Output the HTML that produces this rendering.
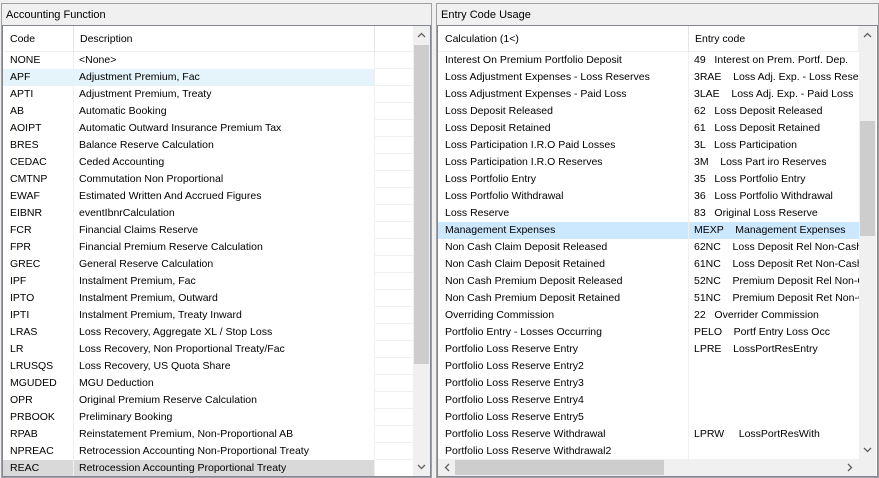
<!DOCTYPE html>
<html><head><meta charset="utf-8"><style>
*{margin:0;padding:0;box-sizing:border-box}
body{width:879px;height:478px;background:#f0f0f0;position:relative;overflow:hidden;font-family:"Liberation Sans",sans-serif;font-size:10.5px;color:#000}
.abs{position:absolute}
.panel{position:absolute;border:1px solid #a0a0a0;background:#f0f0f0}
.list{position:absolute;background:#fff;border:1px solid #828790;overflow:hidden}
.row{position:absolute;left:0;height:17px;border-bottom:1px solid #f0f0f0;white-space:pre;line-height:17px}
.c{position:absolute;top:0;height:17px;border-right:1px solid #f0f0f0;overflow:hidden;padding-left:5px}
.sb{position:absolute;background:#f0f0f0}
.th{position:absolute;background:#cdcdcd}
.arr{position:absolute}
</style></head><body>
<div class="panel" style="left:1px;top:3px;width:431px;height:475px"></div>
<div class="abs" style="left:6px;top:9px;font-size:11px">Accounting Function</div>
<div class="list" style="left:2px;top:25px;width:429px;height:452px">
 <div class="row" style="top:0;height:26px;width:410px;line-height:26px">
  <div class="c" style="left:0;width:71px;height:26px;padding-left:7px;border-right:1px solid #e5e5e5">Code</div>
  <div class="c" style="left:71px;width:301px;height:26px;padding-left:6px;border-right:1px solid #e5e5e5">Description</div>
 </div>
 <div id="L"></div>
 <div class="sb" style="left:410px;top:0;width:17px;height:450px"></div>
 <div class="th" style="left:411px;top:19px;width:15px;height:319px"></div>
 <svg class="arr" style="left:414px;top:6px" width="9" height="6"><path d="M1 5L4.5 1.5L8 5" fill="none" stroke="#606060" stroke-width="1.3"/></svg>
 <svg class="arr" style="left:414px;top:438px" width="9" height="6"><path d="M1 1L4.5 4.5L8 1" fill="none" stroke="#606060" stroke-width="1.3"/></svg>
</div>

<div class="panel" style="left:436px;top:3px;width:443px;height:475px"></div>
<div class="abs" style="left:441px;top:9px;font-size:11px">Entry Code Usage</div>
<div class="list" style="left:437px;top:25px;width:441px;height:452px">
 <div class="row" style="top:0;height:26px;width:421px;line-height:26px">
  <div class="c" style="left:0;width:251px;height:26px;padding-left:7px;border-right:1px solid #e5e5e5">Calculation (1&lt;)</div>
  <div class="c" style="left:251px;width:170px;height:26px;padding-left:6px">Entry code</div>
 </div>
 <div id="R"></div>
 <div class="sb" style="left:421px;top:0;width:17px;height:433px"></div>
 <div class="th" style="left:422px;top:95px;width:15px;height:115px"></div>
 <svg class="arr" style="left:425px;top:6px" width="9" height="6"><path d="M1 5L4.5 1.5L8 5" fill="none" stroke="#606060" stroke-width="1.3"/></svg>
 <svg class="arr" style="left:425px;top:421px" width="9" height="6"><path d="M1 1L4.5 4.5L8 1" fill="none" stroke="#606060" stroke-width="1.3"/></svg>
 <div class="sb" style="left:0;top:433px;width:438px;height:17px"></div>
 <div class="th" style="left:17px;top:434px;width:209px;height:15px"></div>
 <svg class="arr" style="left:6px;top:437px" width="6" height="9"><path d="M5 1L1.5 4.5L5 8" fill="none" stroke="#606060" stroke-width="1.3"/></svg>
 <svg class="arr" style="left:409px;top:437px" width="6" height="9"><path d="M1 1L4.5 4.5L1 8" fill="none" stroke="#606060" stroke-width="1.3"/></svg>
</div>
<script>
var L=[["NONE","<None>"],["APF","Adjustment Premium, Fac"],["APTI","Adjustment Premium, Treaty"],["AB","Automatic Booking"],["AOIPT","Automatic Outward Insurance Premium Tax"],["BRES","Balance Reserve Calculation"],["CEDAC","Ceded Accounting"],["CMTNP","Commutation Non Proportional"],["EWAF","Estimated Written And Accrued Figures"],["EIBNR","eventIbnrCalculation"],["FCR","Financial Claims Reserve"],["FPR","Financial Premium Reserve Calculation"],["GREC","General Reserve Calculation"],["IPF","Instalment Premium, Fac"],["IPTO","Instalment Premium, Outward"],["IPTI","Instalment Premium, Treaty Inward"],["LRAS","Loss Recovery, Aggregate XL / Stop Loss"],["LR","Loss Recovery, Non Proportional Treaty/Fac"],["LRUSQS","Loss Recovery, US Quota Share"],["MGUDED","MGU Deduction"],["OPR","Original Premium Reserve Calculation"],["PRBOOK","Preliminary Booking"],["RPAB","Reinstatement Premium, Non-Proportional AB"],["NPREAC","Retrocession Accounting Non-Proportional Treaty"],["REAC","Retrocession Accounting Proportional Treaty"]];
var R=[["Interest On Premium Portfolio Deposit","49   Interest on Prem. Portf. Dep."],["Loss Adjustment Expenses - Loss Reserves","3RAE    Loss Adj. Exp. - Loss Reserves"],["Loss Adjustment Expenses - Paid Loss","3LAE    Loss Adj. Exp. - Paid Loss"],["Loss Deposit Released","62   Loss Deposit Released"],["Loss Deposit Retained","61   Loss Deposit Retained"],["Loss Participation I.R.O Paid Losses","3L   Loss Participation"],["Loss Participation I.R.O Reserves","3M    Loss Part iro Reserves"],["Loss Portfolio Entry","35   Loss Portfolio Entry"],["Loss Portfolio Withdrawal","36   Loss Portfolio Withdrawal"],["Loss Reserve","83   Original Loss Reserve"],["Management Expenses","MEXP    Management Expenses"],["Non Cash Claim Deposit Released","62NC    Loss Deposit Rel Non-Cash"],["Non Cash Claim Deposit Retained","61NC    Loss Deposit Ret Non-Cash"],["Non Cash Premium Deposit Released","52NC    Premium Deposit Rel Non-Cash"],["Non Cash Premium Deposit Retained","51NC    Premium Deposit Ret Non-Cash"],["Overriding Commission","22   Overrider Commission"],["Portfolio Entry - Losses Occurring","PELO    Portf Entry Loss Occ"],["Portfolio Loss Reserve Entry","LPRE    LossPortResEntry"],["Portfolio Loss Reserve Entry2",""],["Portfolio Loss Reserve Entry3",""],["Portfolio Loss Reserve Entry4",""],["Portfolio Loss Reserve Entry5",""],["Portfolio Loss Reserve Withdrawal","LPRW     LossPortResWith"],["Portfolio Loss Reserve Withdrawal2",""]];
function esc(s){return s.replace(/</g,"&lt;").replace(/>/g,"&gt;")}
var h="";L.forEach(function(r,i){var bg=i==1?"#e5f3fb":i==24?"#d9d9d9":"#fff";
h+='<div class="row" style="top:'+(26+i*17)+'px;width:410px"><div class="c" style="left:0;width:71px;background:'+bg+';padding-left:7px">'+esc(r[0])+'</div><div class="c" style="left:71px;width:301px;background:'+bg+'">'+esc(r[1])+'</div></div>'});
document.getElementById("L").outerHTML=h;
h="";R.forEach(function(r,i){var bg=i==10?"#cce8ff":"#fff";
h+='<div class="row" style="top:'+(26+i*17)+'px;width:421px"><div class="c" style="left:0;width:251px;background:'+bg+';padding-left:7px">'+esc(r[0])+'</div><div class="c" style="left:251px;width:170px;background:'+bg+';border-right:none">'+esc(r[1])+'</div></div>'});
document.getElementById("R").outerHTML=h;
</script>
</body></html>
